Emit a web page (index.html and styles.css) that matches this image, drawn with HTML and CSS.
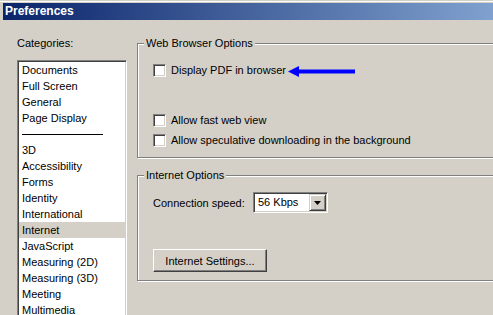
FILE: index.html
```html
<!DOCTYPE html>
<html>
<head>
    <meta charset='utf-8'>
    <title>Preferences</title>
    <meta name='viewport' content='width=device-width, initial-scale=1'>
    <link rel="stylesheet" href="styles.css">
</head>
<body>
<div class="window">
    <div class="titlebar">Preferences</div>
    <div class="content">
        <div class="categories">
            <div class="label">Categories:</div>
            <ul class="list">
                <li>Documents</li>
                <li>Full Screen</li>
                <li>General</li>
                <li>Page Display</li>
                <li class="sep"><span></span></li>
                <li>3D</li>
                <li>Accessibility</li>
                <li>Forms</li>
                <li>Identity</li>
                <li>International</li>
                <li class="selected">Internet</li>
                <li>JavaScript</li>
                <li>Measuring (2D)</li>
                <li>Measuring (3D)</li>
                <li>Meeting</li>
                <li>Multimedia</li>
            </ul>
        </div>
        <div class="panel">
            <fieldset class="group group-web">
                <legend>Web Browser Options</legend>
                <div class="group-body">
                    <label class="option"><span class="check"></span>Display PDF in browser
                        <svg class="pointer" width="68" height="13" viewBox="0 0 68 13">
                            <polygon points="0,6.5 11,1 11,12" fill="#0000ff"/>
                            <rect x="8" y="4.5" width="59" height="4" fill="#0000ff"/>
                        </svg>
                    </label>
                    <label class="option spaced"><span class="check"></span>Allow fast web view</label>
                    <label class="option"><span class="check"></span>Allow speculative downloading in the background</label>
                </div>
            </fieldset>
            <fieldset class="group group-net">
                <legend>Internet Options</legend>
                <div class="group-body">
                    <div class="field">
                        <span class="field-label">Connection speed:</span>
                        <div class="select">
                            <span class="select-value">56 Kbps</span>
                            <span class="drop">
                                <svg width="7" height="4" viewBox="0 0 7 4"><polygon points="0,0 7,0 3.5,4" fill="#000"/></svg>
                            </span>
                        </div>
                    </div>
                    <button class="button">Internet Settings...</button>
                </div>
            </fieldset>
        </div>
    </div>
</div>
</body>
</html>
```

FILE: styles.css
```css
* {
    font-family: "Liberation Sans", Arial, sans-serif;
}

html, body {
    margin: 0;
    padding: 0;
}

body {
    background: #d4d0c8;
    font-size: 11px;
    color: #000;
    overflow: hidden;
}

.window {
    margin-top: 1px;
    border-top: 1px solid #fff;
    padding-top: 1px;
}

.titlebar {
    margin-left: 3px;
    height: 17px;
    line-height: 17px;
    padding-left: 2px;
    color: #fff;
    font-weight: bold;
    font-size: 12px;
    background: linear-gradient(to right, #0a246a 0, #a6caf0 650px);
}

.content {
    display: flex;
    padding: 17px 0 0 17px;
}

.categories {
    width: 110px;
    flex: none;
}

.label {
    line-height: 13px;
    margin-bottom: 10px;
}

.list {
    list-style: none;
    margin: 0;
    padding: 1px;
    height: 270px;
    box-sizing: border-box;
    background: #fff;
    border: 1px solid;
    border-color: #808080 #fff #fff #808080;
    box-shadow: inset 1px 1px 0 #404040, inset -1px -1px 0 #d4d0c8;
}

.list li {
    height: 16px;
    line-height: 16px;
    padding-left: 3px;
    white-space: nowrap;
}

.list li.selected {
    background: #d4d0c8;
}

.list li.sep {
    display: flex;
    align-items: center;
}

.list li.sep span {
    width: 81px;
    border-top: 1px solid #000;
}

.panel {
    margin-left: 10px;
}

.group {
    margin: 0;
    padding: 0 0 0 6px;
    width: 420px;
    min-width: 0;
    border: 1px solid #808080;
    box-shadow: inset 1px 1px 0 #fff, 1px 1px 0 #fff;
}

.group legend {
    padding: 0 2px;
    line-height: 13px;
    background: #d4d0c8;
}

.group-body {
    padding: 10px 0 7px 9px;
}

.group-net {
    margin-top: 11px;
}

.group-net .group-body {
    padding-bottom: 8px;
}

.option {
    display: flex;
    align-items: center;
    height: 20px;
}

.option.spaced {
    margin-top: 30px;
}

.check {
    width: 13px;
    height: 13px;
    box-sizing: border-box;
    margin-right: 5px;
    background: #fff;
    border: 1px solid;
    border-color: #808080 #fff #fff #808080;
    box-shadow: inset 1px 1px 0 #404040, inset -1px -1px 0 #d4d0c8;
}

.pointer {
    margin-left: 2px;
    margin-top: 2px;
}

.field {
    display: flex;
    align-items: center;
    height: 21px;
}

.field-label {
    width: 100px;
}

.select {
    display: flex;
    width: 75px;
    height: 21px;
    box-sizing: border-box;
    padding: 1px;
    background: #fff;
    border: 1px solid;
    border-color: #808080 #fff #fff #808080;
    box-shadow: inset 1px 1px 0 #404040, inset -1px -1px 0 #d4d0c8;
}

.select-value {
    flex: 1;
    padding-left: 3px;
    line-height: 17px;
}

.drop {
    width: 17px;
    height: 17px;
    box-sizing: border-box;
    display: flex;
    align-items: center;
    justify-content: center;
    background: #d4d0c8;
    border: 1px solid;
    border-color: #d4d0c8 #404040 #404040 #d4d0c8;
    box-shadow: inset 1px 1px 0 #fff, inset -1px -1px 0 #808080;
}

.button {
    display: block;
    margin-top: 36px;
    width: 114px;
    height: 23px;
    padding: 0;
    font-size: 11px;
    color: #000;
    background: #d4d0c8;
    border: 1px solid;
    border-color: #fff #404040 #404040 #fff;
    box-shadow: inset -1px -1px 0 #808080, inset 1px 1px 0 #d4d0c8;
}
```
